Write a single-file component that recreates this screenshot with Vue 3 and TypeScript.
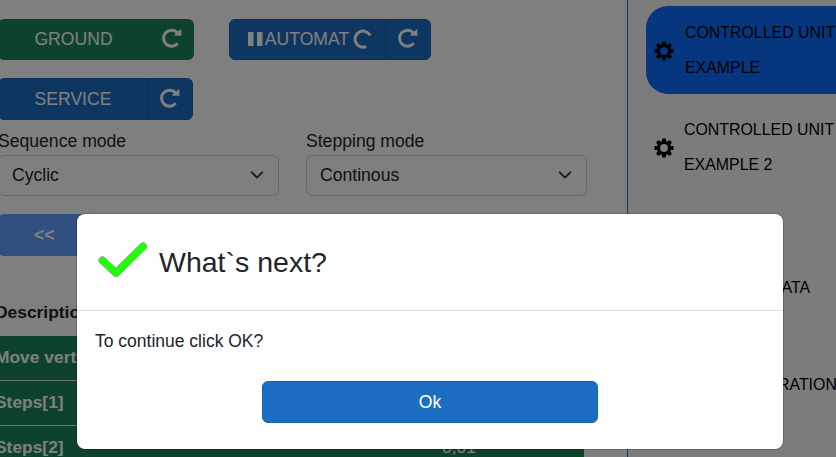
<script setup lang="ts">
interface NavItem {
  lines: string[]
  active?: boolean
  icon?: boolean
  indent?: number
}

const navItems: NavItem[] = [
  { lines: ['CONTROLLED UNIT', 'EXAMPLE'], active: true, icon: true },
  { lines: ['CONTROLLED UNIT', 'EXAMPLE 2'], icon: true },
  { lines: ['DATA'], indent: 116 },
  { lines: ['RATION'], indent: 124 },
]

const rows = [
  { name: 'Move vertical', value: '' },
  { name: 'Steps[1]', value: '' },
  { name: 'Steps[2]', value: '0,01' },
]

const selects = [
  { label: 'Sequence mode', value: 'Cyclic' },
  { label: 'Stepping mode', value: 'Continous' },
]

const reloadArc = 'M15.700 15.300A8 8 0 1 1 15.500 4.800'
const reloadHead = 'M19.400 0.800v7h-6.800v-1.600z'
</script>

<template>
  <div class="page">
    <main class="content">
      <div class="buttons">
        <div class="group green">
          <button class="task">GROUND</button>
          <button class="reload">
            <svg viewBox="0 0 20 20"><path class="arc" :d="reloadArc" /><path class="head" :d="reloadHead" /></svg>
          </button>
        </div>
        <div class="group blue automat">
          <button class="task">
            <svg class="pause" viewBox="0 0 15 14"><path d="M0 0h5.500v14H0zM9 0h5.500v14H9z" /></svg>
            <span>AUTOMAT</span>
            <svg class="spinner" viewBox="0 0 20 20"><path class="arc" d="M17.200 6.500A8 8 0 1 0 13.200 17.500" /></svg>
          </button>
          <button class="reload">
            <svg viewBox="0 0 20 20"><path class="arc" :d="reloadArc" /><path class="head" :d="reloadHead" /></svg>
          </button>
        </div>
      </div>
      <div class="group blue service">
        <button class="task">SERVICE</button>
        <button class="reload">
          <svg viewBox="0 0 20 20"><path class="arc" :d="reloadArc" /><path class="head" :d="reloadHead" /></svg>
        </button>
      </div>
      <div class="selects">
        <div v-for="s in selects" :key="s.label" class="field">
          <label>{{ s.label }}</label>
          <div class="select">
            <span>{{ s.value }}</span>
            <svg viewBox="0 0 16 16"><path d="m2 5 6 6 6-6" /></svg>
          </div>
        </div>
      </div>
      <button class="previous">&lt;&lt;</button>
      <div class="table">
        <div class="thead">Description</div>
        <div v-for="r in rows" :key="r.name" class="row">
          <span>{{ r.name }}</span>
          <span class="value">{{ r.value }}</span>
        </div>
      </div>
    </main>
    <aside class="sidebar">
      <div v-for="(item, i) in navItems" :key="i" class="nav" :class="{ active: item.active, lower: item.indent }">
        <svg v-if="item.icon" class="gear" viewBox="0 0 20 20">
          <g>
            <rect v-for="n in 8" :key="n" x="8" y="0.400" width="4" height="5" rx="1" :transform="`rotate(${n * 45} 10 10)`" />
          </g>
          <circle cx="10" cy="10" r="5.500" />
        </svg>
        <div class="nav-text" :style="{ marginLeft: item.indent ? item.indent + 'px' : undefined }">
          <div v-for="l in item.lines" :key="l">{{ l }}</div>
        </div>
      </div>
    </aside>
    <div class="backdrop">
      <section class="modal" role="dialog">
        <header>
          <svg class="check" viewBox="0 0 50 36">
            <path class="edge" d="M4.500 18.500 18 31 45 4.500" />
            <path class="tick" d="M4.500 18.500 18 31 45 4.500" />
          </svg>
          <h1>What`s next?</h1>
        </header>
        <p>To continue click OK?</p>
        <button class="ok">Ok</button>
      </section>
    </div>
  </div>
</template>

<style>
body {
  margin: 0;
  overflow: hidden;
}
</style>

<style scoped>
* {
  box-sizing: border-box;
}
.page {
  position: relative;
  display: flex;
  width: 836px;
  height: 457px;
  overflow: hidden;
  background: #fff;
  color: #212529;
  font: 17.6px/26px "Liberation Sans", Arial, sans-serif;
}
button {
  font: inherit;
  color: inherit;
  border: 0;
  background: none;
  padding: 0;
  margin: 0;
}
.content {
  flex: 0 0 627px;
  height: 457px;
  padding-top: 19px;
  overflow: hidden;
}
.buttons {
  display: flex;
  gap: 35px;
  margin-left: -2px;
}
.group {
  display: flex;
  width: 196px;
  height: 41px;
  border-radius: 6px;
  color: #fff;
  overflow: hidden;
}
.green {
  background: #198754;
}
.blue {
  background: #1b6ec2;
  border: 1px solid #1861ac;
}
.automat {
  width: 202px;
}
.service {
  width: 195px;
  height: 42px;
  margin: 18px 0 0 -2px;
}
.task {
  flex: 1;
  display: flex;
  align-items: center;
  justify-content: center;
}
.buttons .task {
  padding-bottom: 2px;
}
.automat .task {
  padding-left: 3px;
}
.reload {
  width: 45px;
  display: flex;
  align-items: center;
  justify-content: center;
  padding: 0 0 3px 1px;
}
.blue .reload {
  padding-left: 0;
  border-left: 1px solid #1861ac;
}
.reload svg,
.spinner {
  width: 20px;
  height: 20px;
}
.pause {
  width: 15px;
  height: 14px;
  margin: 0 2px 0 3px;
}
.spinner {
  margin: 1px 0 0 4px;
}
.pause path,
.head {
  fill: #fff;
}
.arc {
  fill: none;
  stroke: #fff;
  stroke-width: 3;
}
.selects {
  display: flex;
  gap: 27px;
  margin: 8px 0 0 -2px;
}
.field {
  width: 281px;
}
.field label {
  display: block;
  height: 27px;
}
.select {
  height: 41px;
  display: flex;
  align-items: center;
  justify-content: space-between;
  padding: 0 13px 1px;
  border: 1px solid #ced4da;
  border-radius: 6px;
}
.select svg {
  width: 14px;
  height: 14px;
  margin-right: 1px;
  fill: none;
  stroke: #343a40;
  stroke-width: 2.3;
  stroke-linecap: round;
  stroke-linejoin: round;
}
.previous {
  display: block;
  width: 280px;
  height: 42px;
  margin: 18px 0 0 -2px;
  padding-left: 36px;
  border-radius: 6px;
  text-align: left;
  color: #fff;
  font-weight: 700;
  background: #62a1fe;
}
.table {
  width: 589px;
  margin: 34px 0 0 -5px;
  font-size: 17.4px;
  font-weight: 700;
}
.thead {
  height: 46px;
  padding-top: 9px;
}
.row {
  display: flex;
  justify-content: space-between;
  height: 45px;
  padding-top: 8px;
  border-bottom: 1px solid #dee2e6;
  background: #198754;
  color: #fff;
}
.value {
  width: 142px;
  font-weight: 400;
}
.sidebar {
  flex: 1;
  min-width: 0;
  height: 457px;
  padding: 6px 0 0 18px;
  border-left: 1px solid #0d6efd;
  background: #f8f9fa;
  color: #000;
  font-size: 15.9px;
  line-height: 35px;
  white-space: nowrap;
}
.nav {
  display: flex;
  align-items: center;
  height: 88px;
  margin-bottom: 9px;
  padding-left: 8px;
  border-radius: 22px 0 0 22px;
}
.lower {
  padding-top: 86px;
}
.active {
  background: #0d6efd;
}
.gear {
  width: 20px;
  height: 20px;
  margin: 1px 10px 0 0;
}
.active .gear {
  margin-right: 11px;
}
.gear rect {
  fill: #000;
}
.gear circle {
  fill: #f8f9fa;
  stroke: #000;
  stroke-width: 3.2;
}
.active .gear circle {
  fill: #0d6efd;
}
.backdrop {
  position: absolute;
  inset: 0;
  padding: 214px 0 0 77px;
  background: rgba(0, 0, 0, 0.5);
}
.modal {
  width: 706px;
  height: 235px;
  border-radius: 8px;
  background: #fff;
  box-shadow: 0 0 0 1px rgba(0, 0, 0, 0.18);
}
.modal header {
  display: flex;
  align-items: center;
  height: 97px;
  padding: 0 0 0 21px;
  border-bottom: 1px solid #dee2e6;
}
.check {
  width: 50px;
  height: 36px;
  margin: 0 11px 4px 0;
}
.check path {
  fill: none;
  stroke-linecap: round;
  stroke-linejoin: round;
}
.edge {
  stroke: #888;
  stroke-width: 7.8;
}
.tick {
  stroke: #21ff06;
  stroke-width: 7;
}
h1 {
  margin: 0;
  font-size: 28.5px;
  line-height: 34px;
  font-weight: 400;
}
.modal p {
  margin: 17px 18px 0;
  font-size: 17.5px;
}
.ok {
  display: block;
  width: 336px;
  height: 42px;
  margin: 27px auto 0;
  border: 1px solid #1861ac;
  border-radius: 6px;
  background: #1b6ec2;
  color: #fff;
}
</style>
